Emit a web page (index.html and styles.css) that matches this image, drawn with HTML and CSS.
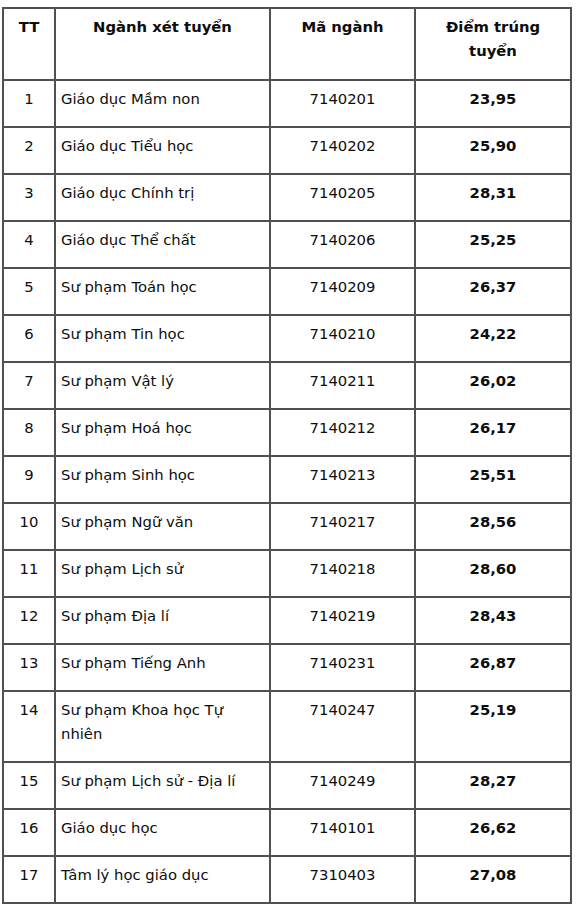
FILE: index.html
```html
<!DOCTYPE html>
<html lang="vi">
<head>
<meta charset="utf-8">
<title>Điểm trúng tuyển</title>
<link rel="stylesheet" href="styles.css">
</head>
<body>
<table class="scores">
  <colgroup>
    <col class="c-tt"><col class="c-name"><col class="c-code"><col class="c-score">
  </colgroup>
  <thead>
    <tr><th>TT</th><th>Ngành xét tuyển</th><th>Mã ngành</th><th>Điểm trúng<br>tuyển</th></tr>
  </thead>
  <tbody>
    <tr><td class="tt">1</td><td class="name">Giáo dục Mầm non</td><td class="code">7140201</td><td class="score">23,95</td></tr>
    <tr><td class="tt">2</td><td class="name">Giáo dục Tiểu học</td><td class="code">7140202</td><td class="score">25,90</td></tr>
    <tr><td class="tt">3</td><td class="name">Giáo dục Chính trị</td><td class="code">7140205</td><td class="score">28,31</td></tr>
    <tr><td class="tt">4</td><td class="name">Giáo dục Thể chất</td><td class="code">7140206</td><td class="score">25,25</td></tr>
    <tr><td class="tt">5</td><td class="name">Sư phạm Toán học</td><td class="code">7140209</td><td class="score">26,37</td></tr>
    <tr><td class="tt">6</td><td class="name">Sư phạm Tin học</td><td class="code">7140210</td><td class="score">24,22</td></tr>
    <tr><td class="tt">7</td><td class="name">Sư phạm Vật lý</td><td class="code">7140211</td><td class="score">26,02</td></tr>
    <tr><td class="tt">8</td><td class="name">Sư phạm Hoá học</td><td class="code">7140212</td><td class="score">26,17</td></tr>
    <tr><td class="tt">9</td><td class="name">Sư phạm Sinh học</td><td class="code">7140213</td><td class="score">25,51</td></tr>
    <tr><td class="tt">10</td><td class="name">Sư phạm Ngữ văn</td><td class="code">7140217</td><td class="score">28,56</td></tr>
    <tr><td class="tt">11</td><td class="name">Sư phạm Lịch sử</td><td class="code">7140218</td><td class="score">28,60</td></tr>
    <tr><td class="tt">12</td><td class="name">Sư phạm Địa lí</td><td class="code">7140219</td><td class="score">28,43</td></tr>
    <tr><td class="tt">13</td><td class="name">Sư phạm Tiếng Anh</td><td class="code">7140231</td><td class="score">26,87</td></tr>
    <tr><td class="tt">14</td><td class="name">Sư phạm Khoa học Tự<br>nhiên</td><td class="code">7140247</td><td class="score">25,19</td></tr>
    <tr><td class="tt">15</td><td class="name">Sư phạm Lịch sử - Địa lí</td><td class="code">7140249</td><td class="score">28,27</td></tr>
    <tr><td class="tt">16</td><td class="name">Giáo dục học</td><td class="code">7140101</td><td class="score">26,62</td></tr>
    <tr><td class="tt">17</td><td class="name">Tâm lý học giáo dục</td><td class="code">7310403</td><td class="score">27,08</td></tr>
  </tbody>
</table>
</body>
</html>
```
FILE: styles.css
```css
html, body {
  margin: 0;
  padding: 0;
  background: #ffffff;
}
body {
  padding: 7px 0 0 2px;
  font-family: "DejaVu Sans", Verdana, sans-serif;
  font-size: 14.8px;
  color: #0d0d0d;
}
.scores {
  border-collapse: collapse;
  table-layout: fixed;
  width: 570px;
}
.c-tt { width: 52px; }
.c-name { width: 215px; }
.c-code { width: 145px; }
.c-score { width: 156px; }
.scores th,
.scores td {
  border: 2px solid #505050;
  line-height: 24px;
  vertical-align: top;
  padding: 6px 5px 15px 5px;
}
.scores th {
  font-weight: bold;
  text-align: center;
  padding: 6px 5px 16px 5px;
}
.tt, .code, .score {
  text-align: center;
}
.name {
  text-align: left;
}
.score {
  font-weight: bold;
}
```
